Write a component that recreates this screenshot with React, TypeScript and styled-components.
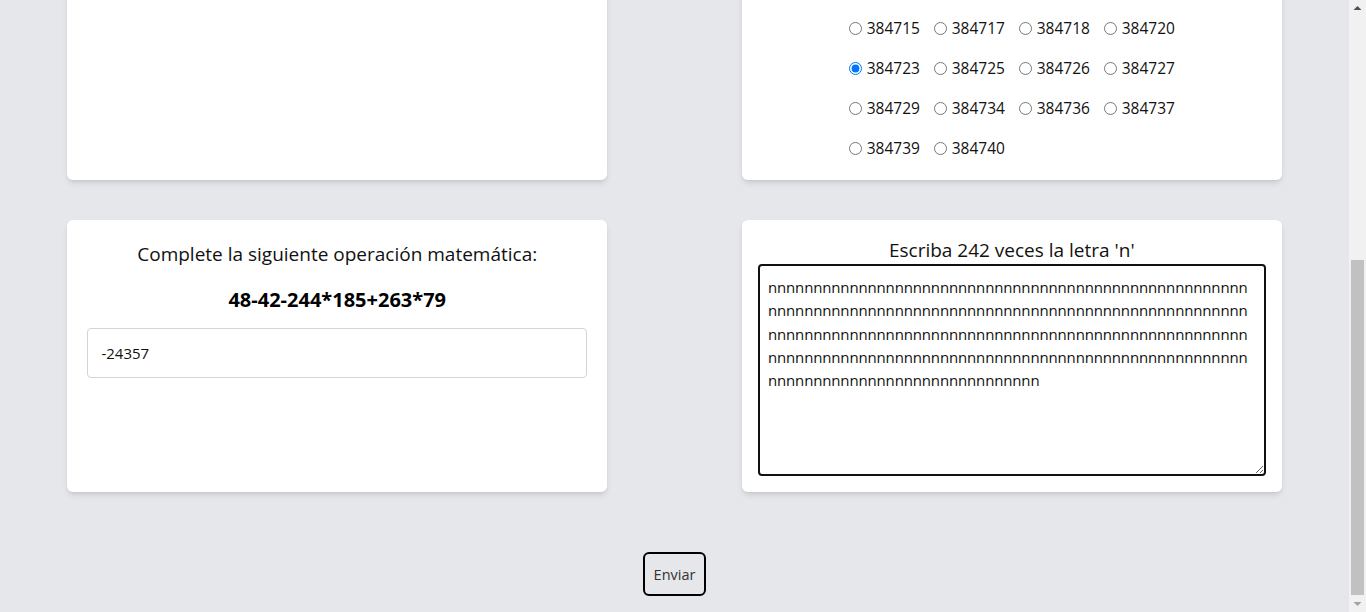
import React, { useLayoutEffect, useRef } from "react";
import styled, { createGlobalStyle } from "styled-components";

const GlobalStyle = createGlobalStyle`
  html, body {
    margin: 0;
    padding: 0;
    background: #e5e7eb;
  }
  body {
    font-family: "Open Sans", "Noto Sans", sans-serif;
    color: #111827;
  }
  * { box-sizing: border-box; }
`;

const Page = styled.main`
  width: calc(100% - 17px);
  padding: 40px 0 16px;
  display: flex;
  flex-direction: column;
  align-items: center;
`;

const Grid = styled.div`
  width: 100%;
  display: grid;
  grid-template-columns: 1fr 1fr;
  row-gap: 40px;
`;

const Card = styled.section<{ $pad: number }>`
  width: 80%;
  justify-self: center;
  background: #ffffff;
  border-radius: 6px;
  box-shadow: 0 4px 6px -1px rgba(0, 0, 0, 0.1), 0 2px 4px -2px rgba(0, 0, 0, 0.1);
  padding: ${(p) => p.$pad}px;
  display: flex;
  flex-direction: column;
  align-items: stretch;
`;

const Title = styled.h2`
  margin: 0;
  font-size: 19px;
  line-height: 28px;
  font-weight: 400;
  text-align: center;
  color: #111111;
`;

const Equation = styled.p`
  margin: 18px 0 0;
  font-size: 20px;
  line-height: 28px;
  font-weight: 700;
  text-align: center;
  color: #000;
`;

const ImageBox = styled.div<{ $h: number }>`
  margin: 16px auto 0;
  width: 320px;
  height: ${(p) => p.$h}px;
  background: #f3f4f6;
  border-radius: 4px;
`;

const RadioGrid = styled.div`
  margin: 16px auto 0;
  display: grid;
  grid-template-columns: repeat(4, 81px);
  column-gap: 4px;
  row-gap: 16px;
`;

const RadioItem = styled.label`
  display: flex;
  align-items: center;
  height: 24px;
  font-size: 15.5px;
  color: #111111;
  white-space: nowrap;

  input {
    margin: 0 5px 0 5px;
    width: 13px;
    height: 13px;
  }
`;

const TextInput = styled.input`
  margin-top: 14px;
  width: 100%;
  height: 50px;
  border: 1px solid #d1d5db;
  border-radius: 4px;
  padding: 0 13px;
  font-family: "Open Sans", "Noto Sans", sans-serif;
  font-size: 15px;
  color: #111111;
  background: #fff;
  outline: none;
`;

const LetterArea = styled.textarea`
  margin-top: 0;
  width: 100%;
  height: 212px;
  border: 2px solid #111111;
  border-radius: 4px;
  padding: 10px 14px 8px 8px;
  font-family: "Open Sans", "Noto Sans", sans-serif;
  font-size: 15px;
  letter-spacing: -0.15px;
  line-height: 23.3px;
  color: #111111;
  background: #fff;
  outline: none;
  resize: both;
`;

const SubmitButton = styled.button`
  margin-top: 60px;
  height: 44px;
  padding: 0 9px;
  border: 2px solid #000;
  border-radius: 6px;
  background: transparent;
  font-family: "Open Sans", "Noto Sans", sans-serif;
  font-size: 14.5px;
  color: #333333;
  cursor: pointer;
`;

/* Browser scrollbar, drawn because the headless window hides its own */
const ScrollBar = styled.div`
  position: fixed;
  top: 0;
  right: 0;
  width: 17px;
  height: 100vh;
  background: #f1f1f1;
  display: flex;
  flex-direction: column;
  align-items: center;
  justify-content: space-between;
`;

const ScrollArrow = styled.svg`
  display: block;
  width: 17px;
  height: 17px;
`;

const ScrollThumb = styled.div`
  position: absolute;
  left: 2px;
  right: 2px;
  top: 260px;
  bottom: 17px;
  background: #c1c1c1;
`;

const options = [
  "384715", "384717", "384718", "384720",
  "384723", "384725", "384726", "384727",
  "384729", "384734", "384736", "384737",
  "384739", "384740",
];

export default function App() {
  const areaRef = useRef<HTMLTextAreaElement>(null);

  useLayoutEffect(() => {
    window.scrollTo(0, document.documentElement.scrollHeight);
    const el = areaRef.current;
    if (el) {
      el.focus({ preventScroll: true });
      const end = el.value.length;
      el.setSelectionRange(end, end);
    }
  }, []);

  return (
    <>
      <GlobalStyle />
      <Page>
        <Grid>
          <Card $pad={16}>
            <Title>Escriba los caracteres de la imagen:</Title>
            <ImageBox $h={120} />
          </Card>
          <Card $pad={16} style={{ paddingBottom: 20 }}>
            <Title>Seleccione el número que aparece en la imagen:</Title>
            <ImageBox $h={344} />
            <RadioGrid>
              {options.map((o) => (
                <RadioItem key={o}>
                  <input type="radio" name="numero" defaultChecked={o === "384723"} />
                  {o}
                </RadioItem>
              ))}
            </RadioGrid>
          </Card>
          <Card $pad={20}>
            <Title>Complete la siguiente operación matemática:</Title>
            <Equation>48-42-244*185+263*79</Equation>
            <TextInput defaultValue="-24357" />
          </Card>
          <Card $pad={16}>
            <Title>Escriba 242 veces la letra 'n'</Title>
            <LetterArea ref={areaRef} defaultValue={"n".repeat(242)} spellCheck={false} />
          </Card>
        </Grid>
        <SubmitButton>Enviar</SubmitButton>
      </Page>
      <ScrollBar>
        <ScrollArrow viewBox="0 0 17 17">
          <path d="M4.5 10 L8.5 6 L12.5 10 Z" fill="#505050" />
        </ScrollArrow>
        <ScrollThumb />
        <ScrollArrow viewBox="0 0 17 17">
          <path d="M4.5 7 L8.5 11 L12.5 7 Z" fill="#a3a3a3" />
        </ScrollArrow>
      </ScrollBar>
    </>
  );
}
